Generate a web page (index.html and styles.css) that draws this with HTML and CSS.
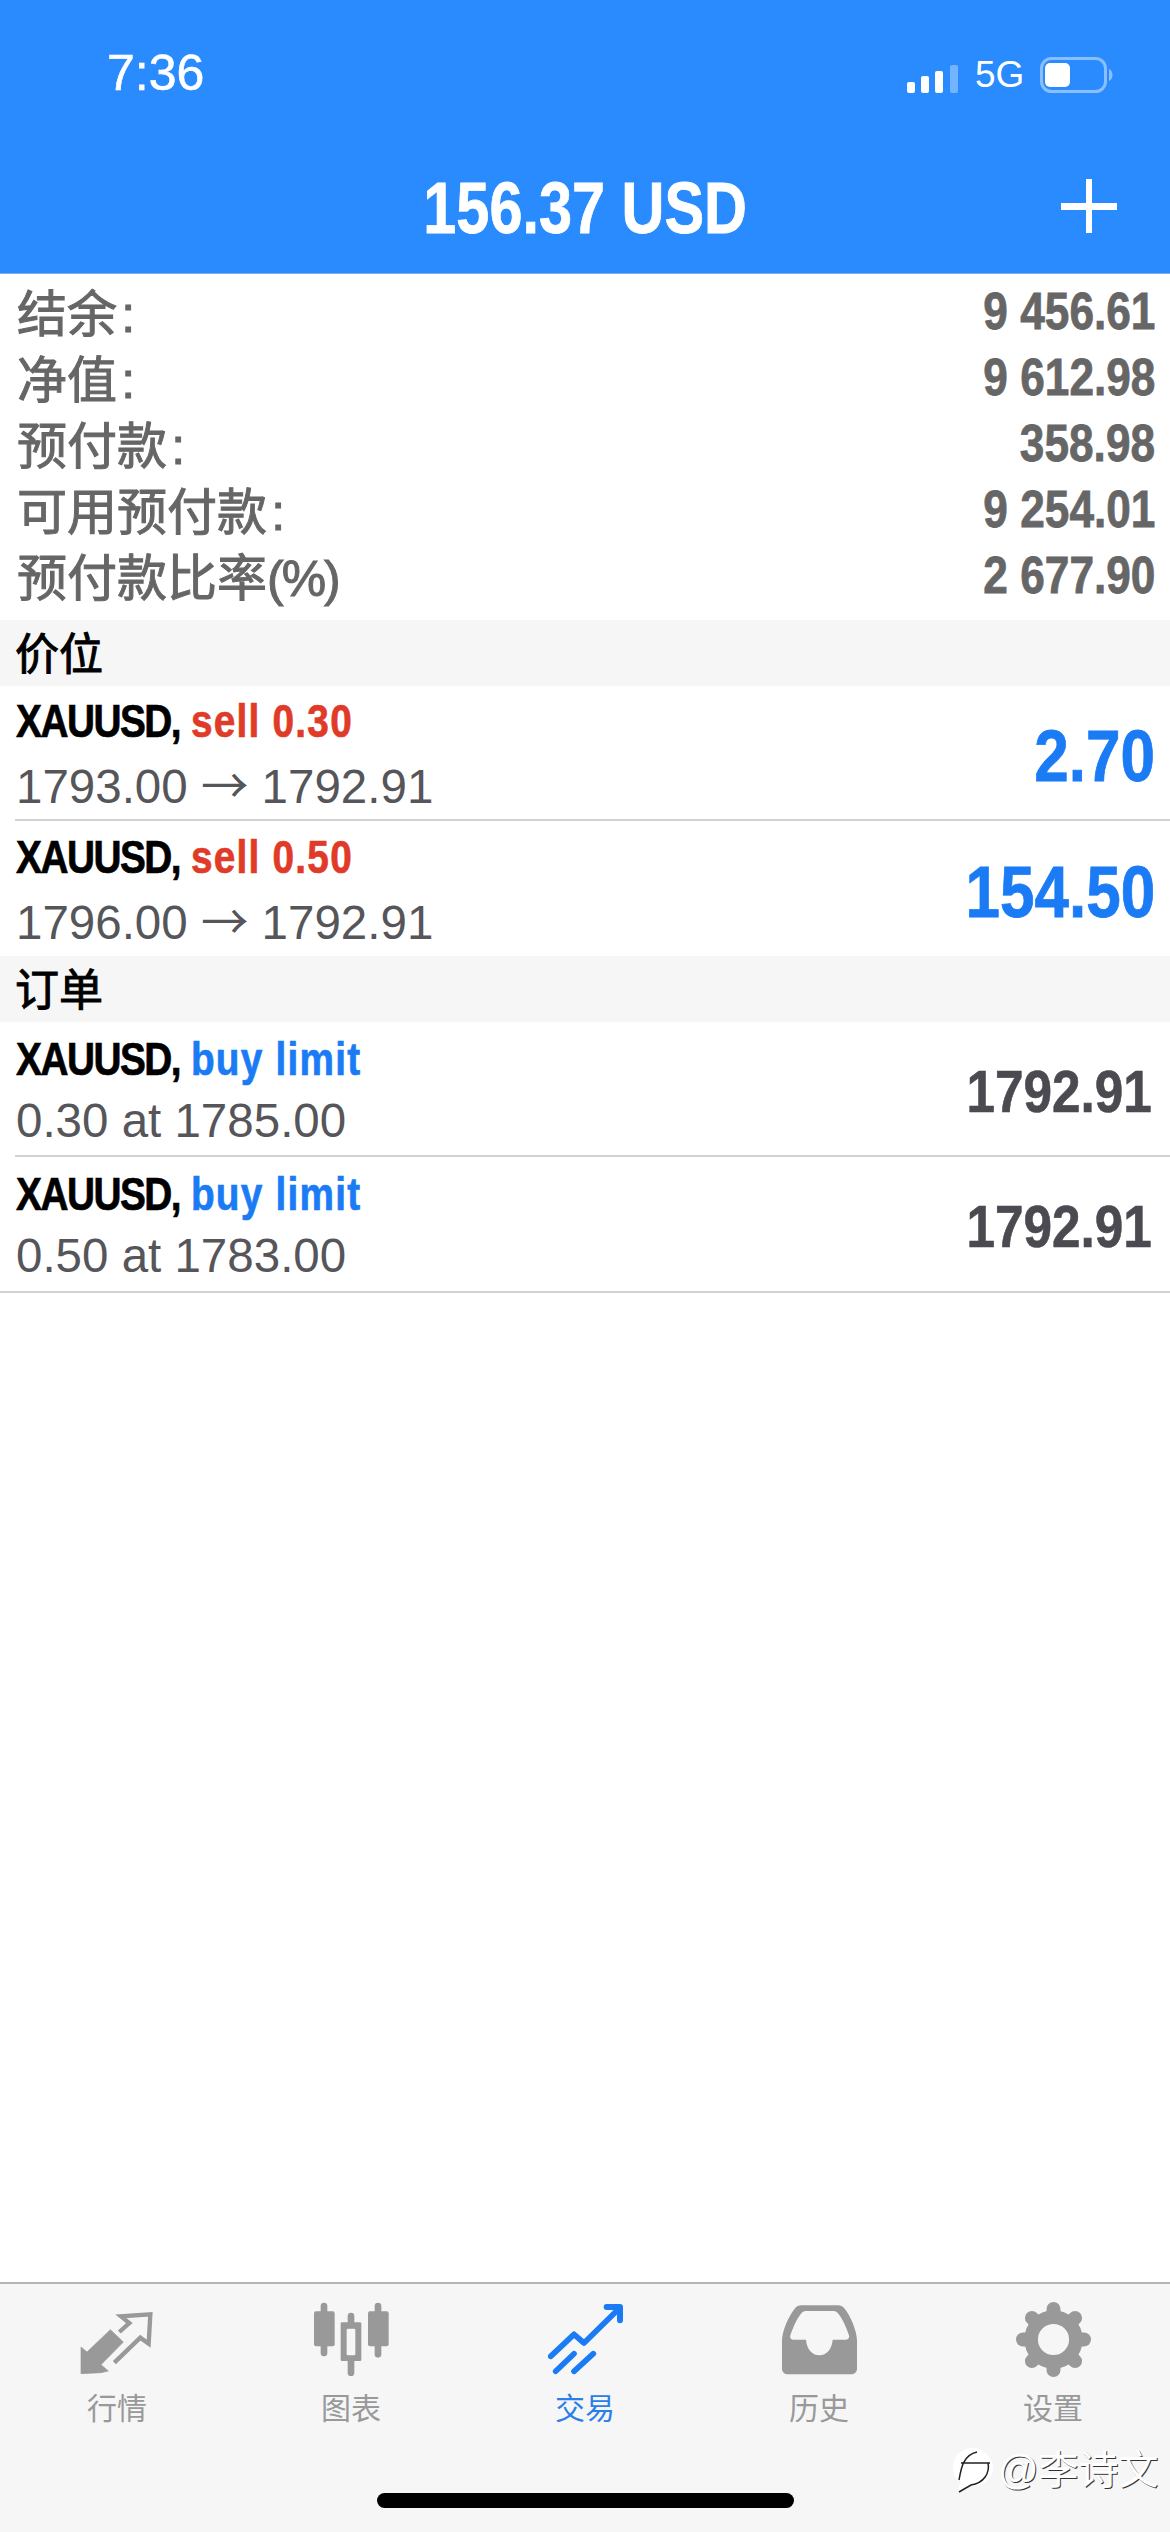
FILE: index.html
```html
<!DOCTYPE html>
<html lang="zh-CN">
<head>
    <meta charset="UTF-8">
    <meta name="viewport" content="width=device-width, initial-scale=1.0">
    <title>交易</title>
    <link rel="stylesheet" href="styles.css">
</head>
<body>
    <header class="top">
        <div class="status">
            <span class="time">7:36</span>
            <div class="status-right">
                <svg class="signal" width="52" height="28" viewBox="0 0 52 28">
                    <rect x="0" y="17" width="8" height="11" rx="2" fill="#fff"/>
                    <rect x="14" y="11" width="8" height="17" rx="2" fill="#fff"/>
                    <rect x="28" y="6" width="8" height="22" rx="2" fill="#fff"/>
                    <rect x="43" y="0" width="8" height="28" rx="2" fill="#fff" opacity=".35"/>
                </svg>
                <span class="net">5G</span>
                <svg class="battery" width="73" height="36" viewBox="0 0 73 36">
                    <rect x="1.500" y="1.500" width="64" height="33" rx="10" fill="none" stroke="#fff" stroke-opacity=".45" stroke-width="3"/>
                    <rect x="5" y="6" width="25" height="24" rx="5" fill="#fff"/>
                    <path d="M69 12c2.500 1 3.500 3.500 3.500 6s-1 5-3.500 6z" fill="#fff" fill-opacity=".45"/>
                </svg>
            </div>
        </div>
        <div class="title-bar">
            <h1 class="title">156.37 USD</h1>
            <svg class="plus" width="56" height="54" viewBox="0 0 56 54">
                <rect x="25" y="0" width="6" height="54" fill="#fff"/>
                <rect x="0" y="24" width="56" height="7" fill="#fff"/>
            </svg>
        </div>
    </header>

    <main class="content">
        <section class="summary">
            <div class="sum-row"><span>结余&#8202;:</span><b>9 456.61</b></div>
            <div class="sum-row"><span>净值&#8202;:</span><b>9 612.98</b></div>
            <div class="sum-row"><span>预付款&#8202;:</span><b>358.98</b></div>
            <div class="sum-row"><span>可用预付款&#8202;:</span><b>9 254.01</b></div>
            <div class="sum-row"><span>预付款比率<span class="pct">(%)</span></span><b>2 677.90</b></div>
        </section>

        <h2 class="band">价位</h2>
        <div class="row">
            <div class="row-inner">
                <div>
                    <div class="line1"><span class="sym">XAUUSD,</span> <span class="sell">sell 0.30</span></div>
                    <div class="line2">1793.00 <span class="arrow">→</span> 1792.91</div>
                </div>
                <div class="profit">2.70</div>
            </div>
        </div>
        <div class="row">
            <div class="row-inner no-line">
                <div>
                    <div class="line1"><span class="sym">XAUUSD,</span> <span class="sell">sell 0.50</span></div>
                    <div class="line2">1796.00 <span class="arrow">→</span> 1792.91</div>
                </div>
                <div class="profit">154.50</div>
            </div>
        </div>

        <h2 class="band">订单</h2>
        <div class="row">
            <div class="row-inner">
                <div>
                    <div class="line1"><span class="sym">XAUUSD,</span> <span class="buy">buy limit</span></div>
                    <div class="line2">0.30 at 1785.00</div>
                </div>
                <div class="price">1792.91</div>
            </div>
        </div>
        <div class="row row-last">
            <div class="row-inner no-line">
                <div>
                    <div class="line1"><span class="sym">XAUUSD,</span> <span class="buy">buy limit</span></div>
                    <div class="line2">0.50 at 1783.00</div>
                </div>
                <div class="price">1792.91</div>
            </div>
        </div>
    </main>

    <nav class="tabbar">
        <div class="tabs">
            <div class="tab">
                <svg width="75" height="75" viewBox="237 115 225 225">
                    <path d="M240 330V250l18 15 70-67 39 37-67 68 22 19-22 5z" fill="#999" stroke="#999" stroke-width="2" stroke-linejoin="round"/>
                    <path d="M355 205l30-27-25-20 88-6-5 88-25-18-78 75" fill="none" stroke="#999" stroke-width="13"/>
                </svg>
                <span>行情</span>
            </div>
            <div class="tab">
                <svg width="75" height="75" viewBox="940 125 225 225">
                    <rect x="960" y="127" width="20" height="161" rx="10" fill="#999"/>
                    <rect x="940" y="153" width="62" height="105" rx="6" fill="#999"/>
                    <rect x="1041" y="157" width="20" height="190" rx="10" fill="#999"/>
                    <rect x="1020" y="186" width="62" height="116" rx="4" fill="#999"/>
                    <rect x="1038" y="205" width="26" height="80" rx="4" fill="#f6f6f6"/>
                    <rect x="1122" y="127" width="20" height="165" rx="10" fill="#999"/>
                    <rect x="1102" y="153" width="62" height="105" rx="6" fill="#999"/>
                </svg>
                <span>图表</span>
            </div>
            <div class="tab active">
                <svg width="75" height="75" viewBox="232 125 225 225">
                    <path d="M240 288l70-66 30 26 100-98M255 333l55-53M310 333l58-53" fill="none" stroke="#1a7bf5" stroke-width="17" stroke-linecap="round" stroke-linejoin="round"/>
                    <path d="M408 140h40v40" fill="none" stroke="#1a7bf5" stroke-width="18" stroke-linecap="round" stroke-linejoin="round"/>
                </svg>
                <span>交易</span>
            </div>
            <div class="tab">
                <svg width="75" height="75" viewBox="933 125 225 225">
                    <path fill-rule="evenodd" d="M933 240c0-30 22-75 38-95 6-7 12-10 20-10h110c8 0 14 3 20 10 16 20 37 65 37 95v85c0 10-8 17-18 17H951c-10 0-18-7-18-17zM958 225c-2 8 2 13 8 13h39c2 27 18 47 40 47s38-20 40-47h40c7 0 11-5 9-13-8-25-20-50-32-65-4-5-8-8-14-8H1004c-6 0-10 3-14 8-12 15-24 40-32 65z" fill="#999"/>
                </svg>
                <span>历史</span>
            </div>
            <div class="tab">
                <svg class="gear" width="75" height="75" viewBox="-113 -113 226 226">
                    <circle r="88" fill="#999"/>
                    <g stroke="#999" stroke-width="42" stroke-linecap="round">
                        <line y1="-70" y2="-92"/>
                        <line y1="-70" y2="-92" transform="rotate(45)"/>
                        <line y1="-70" y2="-92" transform="rotate(90)"/>
                        <line y1="-70" y2="-92" transform="rotate(135)"/>
                        <line y1="-70" y2="-92" transform="rotate(180)"/>
                        <line y1="-70" y2="-92" transform="rotate(225)"/>
                        <line y1="-70" y2="-92" transform="rotate(270)"/>
                        <line y1="-70" y2="-92" transform="rotate(315)"/>
                    </g>
                    <circle r="47" fill="#f6f6f6"/>
                </svg>
                <span>设置</span>
            </div>
        </div>
        <div class="home-bar"></div>
    </nav>

    <!-- watermark sits over the tab bar -->
    <div class="watermark">
        <svg width="42" height="46" viewBox="0 0 42 46">
            <path d="M21 1C9 1 1 9 1 21c0 6 3 11 7 14l-2 10 11-7c2 0 3 1 4 1 11 0 20-8 20-18S32 1 21 1z" fill="#fff"/>
            <path d="M7 33C9 22 11 8 25 5M9 16h29M36 16c2 10-4 20-17 22L7 45" fill="none" stroke="#222" stroke-width="1.500"/>
        </svg>
        <span>@李诗文</span>
    </div>
</body>
</html>
```

FILE: styles.css
```css
* { box-sizing: border-box; }

body {
    margin: 0;
    width: 1170px;
    height: 2532px;
    display: flex;
    flex-direction: column;
    position: relative;
    overflow: hidden;
    background: #fff;
    font-family: "Liberation Sans", "Noto Sans CJK SC", sans-serif;
}

/* blue header */
.top {
    height: 274px;
    background: #2a8bff;
    border-bottom: 1px solid #7db1ec;
    color: #fff;
}

.status {
    height: 166px;
    padding: 44px 57px 0 107px;
    display: flex;
    justify-content: space-between;
    align-items: flex-start;
}

.time {
    font-size: 50px;
    line-height: 58px;
    -webkit-text-stroke: .6px #fff;
}

.status-right {
    display: flex;
    align-items: center;
    height: 36px;
    margin-top: 13px;
}

.signal { margin-top: 8px; }

.net {
    font-size: 37px;
    margin-left: 16px;
    width: 65px;
}

.title-bar {
    display: flex;
    justify-content: center;
    position: relative;
}

.title {
    margin: 0;
    font-size: 72px;
    line-height: 84px;
    font-weight: bold;
    transform: scaleX(.825);
    -webkit-text-stroke: .8px #fff;
}

.plus { position: absolute; right: 53px; top: 13px; }

.content { flex: 1; }

/* account summary */
.summary { padding: 4px 15px 12px 17px; }

.sum-row {
    height: 66px;
    display: flex;
    justify-content: space-between;
    align-items: center;
    color: #666;
    font-size: 50px;
    -webkit-text-stroke: 1px #666;
}

.sum-row > span { margin-bottom: 3px; }

.pct { letter-spacing: -2px; }

.sum-row b {
    font-size: 52px;
    font-weight: bold;
    -webkit-text-stroke: .8px #666;
    transform: scaleX(.85);
    transform-origin: right;
}

.band {
    margin: 0;
    height: 66px;
    padding-left: 15px;
    background: #f6f6f6;
    color: #000;
    font-size: 44px;
    font-weight: normal;
    line-height: 70px;
    -webkit-text-stroke: 1px #000;
}

/* positions and orders */
.row { height: 135px; padding-left: 15px; }
.row-last { padding-left: 0; border-bottom: 2px solid #d2d2d2; height: 136px; }
.row-last .row-inner { padding-left: 16px; }

.row-inner {
    height: 100%;
    padding: 2px 15px 0 1px;
    display: flex;
    justify-content: space-between;
    align-items: center;
    border-bottom: 2px solid #d2d2d2;
}

.row-inner.no-line { border-bottom: none; }

.line1 {
    font-size: 47px;
    font-weight: bold;
    line-height: 62px;
    color: #000;
    transform: scaleX(.825);
    transform-origin: left;
    -webkit-text-stroke: .7px;
}

.sym { letter-spacing: -1.800px; }
.sell { color: #e03a28; letter-spacing: 1.500px; }
.buy { color: #1a7bf5; letter-spacing: 1.500px; }

.line2 {
    font-size: 47.500px;
    line-height: 62px;
    color: #55555a;
}

.arrow { font-family: "Noto Sans CJK SC", sans-serif; }

.profit, .price {
    font-weight: bold;
    transform-origin: right;
    margin-top: 3px;
}

.profit {
    font-size: 73px;
    color: #1a7bf5;
    transform: scaleX(.85);
    -webkit-text-stroke: .8px #1a7bf5;
}

.price {
    font-size: 60px;
    color: #4a4a50;
    margin-right: 3px;
    transform: scaleX(.855);
    -webkit-text-stroke: .6px #4a4a50;
}

/* bottom tabs */
.tabbar {
    height: 250px;
    background: #f6f6f6;
    border-top: 2px solid #b5b5b5;
    display: flex;
    flex-direction: column;
}

.tabs {
    display: grid;
    grid-template-columns: repeat(5, 1fr);
    padding-top: 18px;
}

.tab {
    display: flex;
    flex-direction: column;
    align-items: center;
    gap: 16px;
    color: #999;
    font-size: 30px;
    line-height: 32px;
}

.tab.active { color: #2a80ea; }

.home-bar {
    width: 417px;
    height: 15px;
    margin: auto auto 24px;
    background: #000;
    border-radius: 8px;
}

.watermark {
    position: absolute;
    left: 952px;
    top: 2447px;
    display: flex;
    align-items: center;
    gap: 4px;
    color: #fff;
    font-size: 40px;
    line-height: 44px;
    text-shadow: 1px 1px 0 #333;
}
```
